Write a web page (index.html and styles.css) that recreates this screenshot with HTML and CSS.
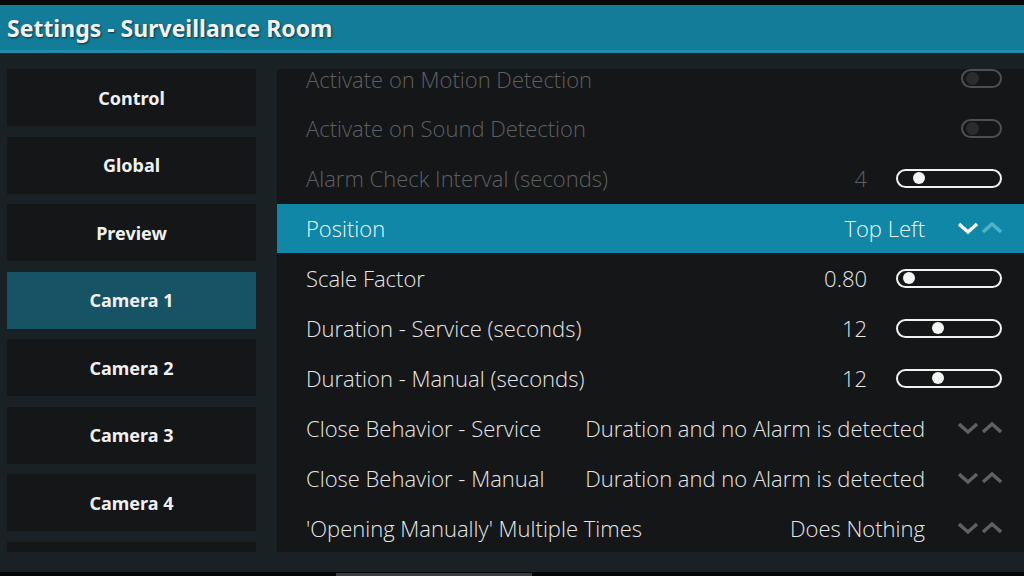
FILE: index.html
```html
<!DOCTYPE html>
<html>
<head>
<meta charset="utf-8">
<link rel="stylesheet" href="styles.css">
</head>
<body>
<div class="screen">
  <div class="topstrip"></div>
  <header class="header"><h1>Settings - Surveillance Room</h1></header>
  <main class="body">
    <nav class="cats">
      <div class="cat">Control</div>
      <div class="cat">Global</div>
      <div class="cat">Preview</div>
      <div class="cat active">Camera 1</div>
      <div class="cat">Camera 2</div>
      <div class="cat">Camera 3</div>
      <div class="cat">Camera 4</div>
      <div class="cat"></div>
    </nav>
    <section class="panel">
      <div class="list">
        <div class="row disabled partial"><span class="label">Activate on Motion Detection</span><span class="toggle"><i></i></span></div>
        <div class="row disabled"><span class="label">Activate on Sound Detection</span><span class="toggle"><i></i></span></div>
        <div class="row disabled"><span class="label">Alarm Check Interval (seconds)</span><span class="value">4</span><span class="slider"><i style="left:15px"></i></span></div>
        <div class="row focus"><span class="label">Position</span><span class="value">Top Left</span><span class="spin"><svg viewBox="0 0 44 14" width="44" height="14"><path class="dn" d="M1 3 L10 11 L19 3" /><path class="up" d="M25 11 L34 3 L43 11"/></svg></span></div>
        <div class="row"><span class="label">Scale Factor</span><span class="value">0.80</span><span class="slider"><i style="left:5px"></i></span></div>
        <div class="row"><span class="label">Duration - Service (seconds)</span><span class="value">12</span><span class="slider"><i style="left:34px"></i></span></div>
        <div class="row"><span class="label">Duration - Manual (seconds)</span><span class="value">12</span><span class="slider"><i style="left:34px"></i></span></div>
        <div class="row"><span class="label">Close Behavior - Service</span><span class="value">Duration and no Alarm is detected</span><span class="spin"><svg viewBox="0 0 44 14" width="44" height="14"><path class="dn" d="M1 3 L10 11 L19 3" /><path class="up" d="M25 11 L34 3 L43 11"/></svg></span></div>
        <div class="row"><span class="label">Close Behavior - Manual</span><span class="value">Duration and no Alarm is detected</span><span class="spin"><svg viewBox="0 0 44 14" width="44" height="14"><path class="dn" d="M1 3 L10 11 L19 3" /><path class="up" d="M25 11 L34 3 L43 11"/></svg></span></div>
        <div class="row last"><span class="label">'Opening Manually' Multiple Times</span><span class="value">Does Nothing</span><span class="spin"><svg viewBox="0 0 44 14" width="44" height="14"><path class="dn" d="M1 3 L10 11 L19 3" /><path class="up" d="M25 11 L34 3 L43 11"/></svg></span></div>
      </div>
    </section>
  </main>
  <footer class="bottom"><div class="ghost"></div></footer>
</div>
</body>
</html>
```

FILE: styles.css
```css
html, body {
  margin: 0;
  padding: 0;
  background: #050607;
}
.screen {
  width: 1024px;
  height: 576px;
  display: flex;
  flex-direction: column;
  overflow: hidden;
  font-family: "Noto Sans", "Open Sans", sans-serif;
  color: #e8e8e8;
}
.topstrip {
  height: 5px;
  background: #07090a;
}
.header {
  height: 45px;
  background: #137c98;
  border-bottom: 3px solid #1d8eaa;
  display: flex;
  align-items: center;
  padding-left: 7px;
}
.header h1 {
  margin: 0;
  font-size: 23px;
  font-weight: 700;
  color: #f2f2f2;
  text-shadow: 1px 1px 2px rgba(0,0,0,0.6);
}
.body {
  height: 519px;
  background: #1a2124;
  display: flex;
  padding: 16px 0 0 7px;
  box-sizing: border-box;
  gap: 21px;
}
.cats {
  width: 249px;
  height: 483px;
  overflow: hidden;
  display: flex;
  flex-direction: column;
  gap: 10.5px;
  flex-shrink: 0;
}
.cat {
  height: 57px;
  flex-shrink: 0;
  background: #141618;
  display: flex;
  align-items: center;
  justify-content: center;
  font-weight: 700;
  font-size: 18px;
  color: #f0f0f0;
}
.cat.active {
  background: #155365;
}
.panel {
  flex: 1;
  height: 483px;
  background: #141618;
}
.row {
  height: 50px;
  display: flex;
  align-items: center;
  padding: 0 22px 2px 29px;
  font-family: "Open Sans", "Noto Sans", sans-serif;
  font-weight: 300;
  font-size: 22px;
  color: #e6e6e6;
  box-sizing: border-box;
}
.row.partial {
  height: 35px;
  padding-top: 0;
  padding-bottom: 16px;
  line-height: 20px;
}
.row.last {
  height: 48px;
  padding-bottom: 0;
}
.row .label {
  flex: 1;
  white-space: nowrap;
}
.row.partial .label {
  display: block;
  height: 20px;
  line-height: 20px;
}
.row .value {
  white-space: nowrap;
}
.row.disabled {
  color: #5d6063;
}
.row.focus {
  background: #1087a7;
  height: 49px;
  margin-bottom: 1px;
  color: #eef6f8;
}
.toggle {
  width: 41px;
  height: 19px;
  box-sizing: border-box;
  border: 2px solid #4d4f51;
  border-radius: 10px;
  position: relative;
}
.toggle i {
  position: absolute;
  left: 3px;
  top: 1px;
  width: 13px;
  height: 13px;
  border-radius: 50%;
  background: #2a2c2e;
}
.slider {
  box-sizing: border-box;
  height: 19px;
  width: 106px;
  border: 2px solid #f2f2f2;
  border-radius: 11px;
  margin-left: 29px;
  position: relative;
}
.slider i {
  position: absolute;
  top: 1.5px;
  width: 12px;
  height: 12px;
  border-radius: 50%;
  background: #f4f4f4;
}
.spin {
  margin-left: 33px;
  width: 44px;
  height: 14px;
  display: flex;
}
.spin path {
  fill: none;
  stroke: #5f6163;
  stroke-width: 3.4;
  stroke-linejoin: miter;
}
.focus .spin path.dn {
  stroke: #ffffff;
}
.focus .spin path.up {
  stroke: #4fb3cc;
}
.bottom {
  flex: 1;
  background: #050607;
  position: relative;
}
.ghost {
  position: absolute;
  left: 336px;
  top: 1px;
  width: 196px;
  height: 6px;
  background: #3a3d40;
}
```
